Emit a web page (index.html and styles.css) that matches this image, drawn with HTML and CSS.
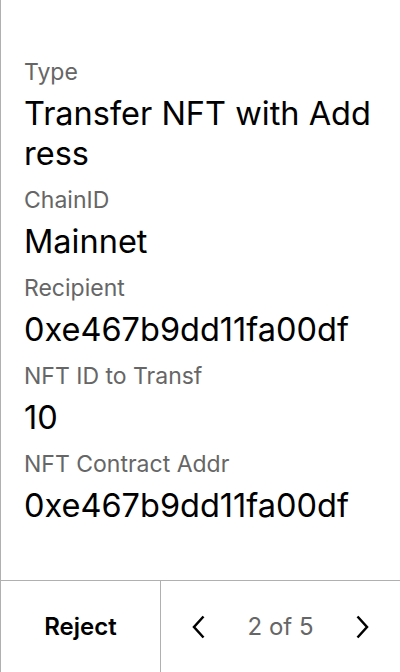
FILE: index.html
```html
<!DOCTYPE html>
<html>
<head>
<meta charset="utf-8">
<link rel="stylesheet" href="styles.css">
</head>
<body>
<div class="screen">
  <main class="fields">
    <div class="field">
      <div class="label">Type</div>
      <div class="value">Transfer NFT with Address</div>
    </div>
    <div class="field">
      <div class="label">ChainID</div>
      <div class="value">Mainnet</div>
    </div>
    <div class="field">
      <div class="label">Recipient</div>
      <div class="value">0xe467b9dd11fa00df</div>
    </div>
    <div class="field">
      <div class="label">NFT ID to Transf</div>
      <div class="value">10</div>
    </div>
    <div class="field">
      <div class="label">NFT Contract Addr</div>
      <div class="value">0xe467b9dd11fa00df</div>
    </div>
  </main>
  <footer class="footer">
    <div class="reject">Reject</div>
    <div class="pager">
      <svg class="chev" width="24" height="24" viewBox="0 0 24 24"><path d="M15.5 1.5 L6 12 L15.5 22.5" fill="none" stroke="#000" stroke-width="2.5" stroke-linecap="butt" stroke-linejoin="miter"/></svg>
      <span class="count">2 of 5</span>
      <svg class="chev" width="24" height="24" viewBox="0 0 24 24"><path d="M8.5 1.5 L18 12 L8.5 22.5" fill="none" stroke="#000" stroke-width="2.5" stroke-linecap="butt" stroke-linejoin="miter"/></svg>
    </div>
  </footer>
</div>
</body>
</html>
```
FILE: styles.css
```css
* { box-sizing: border-box; }
html, body { margin: 0; padding: 0; background: #fff; }
body { font-family: Inter, "Noto Sans", sans-serif; color: #000; }
.screen {
  width: 400px;
  height: 672px;
  border-left: 1px solid #b0b0b0;
  display: flex;
  flex-direction: column;
}
.fields {
  flex: 1;
  padding: 58px 22px 0 23px;
  display: flex;
  flex-direction: column;
  gap: 12px;
}
.label {
  font-size: 23px;
  line-height: 28px;
  color: #666;
  margin-bottom: 8px;
}
.value {
  font-size: 32.5px;
  line-height: 40px;
  color: #000;
  word-break: break-all;
}
.footer {
  height: 92px;
  border-top: 1px solid #b0b0b0;
  display: flex;
}
.reject {
  width: 160px;
  border-right: 1px solid #b0b0b0;
  display: flex;
  align-items: center;
  justify-content: center;
  font-size: 24px;
  font-weight: 600;
}
.pager {
  flex: 1;
  display: flex;
  align-items: center;
  justify-content: space-between;
  padding: 0 27px;
}
.count {
  font-size: 24px;
  color: #666;
}
.chev { display: block; }
```
